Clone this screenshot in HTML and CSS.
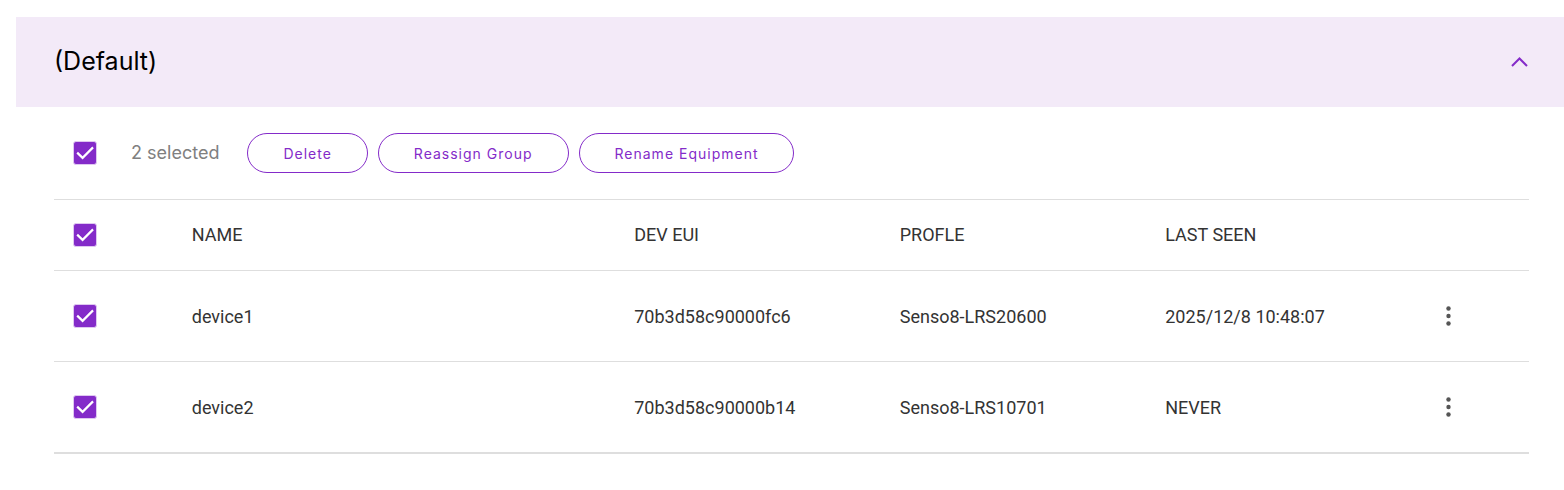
FILE: index.html
```html
<!DOCTYPE html>
<html lang="en">
<head>
<meta charset="utf-8">
<title>Devices</title>
<link rel="stylesheet" href="styles.css">
</head>
<body>
<main class="panel">
  <header class="panel-header">
    <h1 class="panel-title">(Default)</h1>
    <button class="collapse" type="button" aria-label="Collapse group"><svg width="24" height="24" viewBox="0 0 24 24"><path d="M4 16 11.500 8.500 19 16" fill="none" stroke="currentColor" stroke-width="2"/></svg></button>
  </header>
  <div class="panel-body">
    <div class="toolbar">
      <input class="check" type="checkbox" id="selected" checked>
      <label class="count" for="selected">2 selected</label>
      <div class="actions">
        <button class="pill" type="button">Delete</button>
        <button class="pill" type="button">Reassign Group</button>
        <button class="pill" type="button">Rename Equipment</button>
      </div>
    </div>
    <table class="devices">
      <colgroup><col class="col-check"><col class="col-name"><col class="col-mid"><col class="col-mid"><col class="col-mid"><col class="col-menu"></colgroup>
      <thead>
        <tr><th class="cell-check"><input class="check" type="checkbox" aria-label="Select all devices" checked></th><th>NAME</th><th>DEV EUI</th><th>PROFLE</th><th>LAST SEEN</th><th></th></tr>
      </thead>
      <tbody>
        <tr><td class="cell-check"><input class="check" type="checkbox" aria-label="Select device1" checked></td><td>device1</td><td>70b3d58c90000fc6</td><td>Senso8-LRS20600</td><td>2025/12/8 10:48:07</td><td class="cell-menu"><button class="menu" type="button" aria-label="Actions for device1"><svg width="24" height="24" viewBox="0 0 24 24" fill="currentColor"><circle cx="11.500" cy="4.500" r="2.200"/><circle cx="11.500" cy="12" r="2.200"/><circle cx="11.500" cy="19.500" r="2.200"/></svg></button></td></tr>
        <tr><td class="cell-check"><input class="check" type="checkbox" aria-label="Select device2" checked></td><td>device2</td><td>70b3d58c90000b14</td><td>Senso8-LRS10701</td><td>NEVER</td><td class="cell-menu"><button class="menu" type="button" aria-label="Actions for device2"><svg width="24" height="24" viewBox="0 0 24 24" fill="currentColor"><circle cx="11.500" cy="4.500" r="2.200"/><circle cx="11.500" cy="12" r="2.200"/><circle cx="11.500" cy="19.500" r="2.200"/></svg></button></td></tr>
      </tbody>
    </table>
  </div>
</main>
</body>
</html>
```

FILE: styles.css
```css
* { box-sizing: border-box; }
body { margin: 0; background: #fff; color: #333; font-family: Roboto, sans-serif; }
.panel { padding: 17px 0 0 16px; }
.panel-header { display: flex; align-items: center; justify-content: space-between; height: 90px; padding: 0 32px 0 38px; background: #f3eaf8; }
.panel-title { margin: 0; padding-bottom: 2px; color: #000; font: 400 25px/32px Inter, sans-serif; }
.collapse, .menu { display: flex; width: 24px; height: 24px; padding: 0; border: 0; background: none; color: #842bc9; cursor: pointer; }
.panel-body { padding: 0 35px 0 38px; }
.toolbar { display: flex; align-items: center; height: 92px; padding-left: 19px; }
.check { appearance: none; display: block; flex: none; width: 24px; height: 24px; margin: 0; border: 1px solid #dfc8f1; border-radius: 3px; background: #842bc9; cursor: pointer; }
.check:checked::before { content: ""; display: block; width: 22px; height: 22px; background: #fff; clip-path: polygon(39% 80%, 11% 52%, 18% 44%, 39% 65%, 83% 21%, 90% 28%); }
.count { margin-left: 34px; color: #808080; font: 400 18px/24px Inter, sans-serif; }
.actions { display: flex; gap: 10px; margin-left: 28px; }
.pill { height: 40px; padding: 2px 35px 0; border: 1px solid #842bc9; border-radius: 20px; background: #fff; color: #842bc9; font: 400 14px/20px Inter, sans-serif; letter-spacing: 1px; cursor: pointer; }
.devices { width: 100%; table-layout: fixed; border-collapse: separate; border-spacing: 0; border-top: 1px solid #dedede; font-size: 18px; line-height: 24px; }
.col-check { width: 9%; }
.col-name { width: 30%; }
.col-mid { width: 18%; }
.col-menu { width: 7%; }
th, td { padding: 0 5px; border-bottom: 1px solid #dedede; font-weight: 400; text-align: left; }
th { height: 71px; }
td { height: 91px; padding-top: 2px; }
.devices .cell-check { padding: 0 0 0 19px; }
.devices .cell-menu { padding: 0 0 0 11px; }
.menu { color: #555; }
tbody tr:last-child td { height: 92px; border-bottom-width: 2px; }
```
